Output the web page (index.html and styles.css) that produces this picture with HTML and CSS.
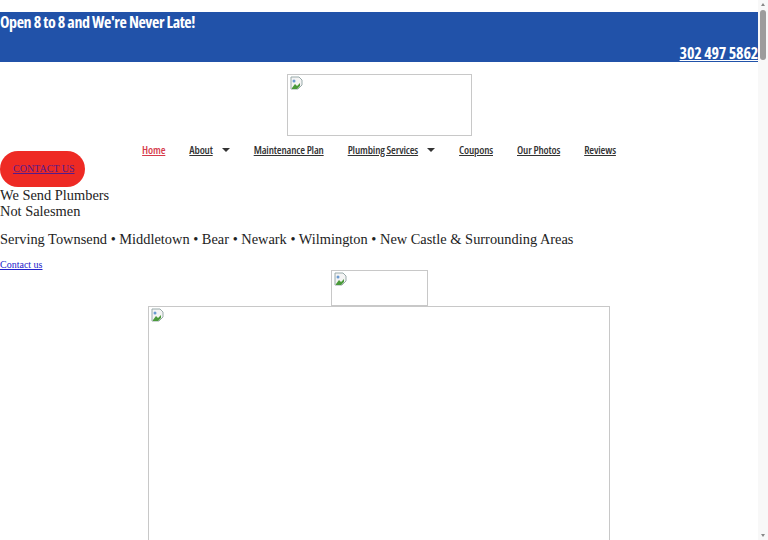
FILE: index.html
```html
<!DOCTYPE html>
<html>
<head>
<meta charset="utf-8">
<link rel="stylesheet" href="styles.css">
</head>
<body>
<div class="page">
<header class="topbar">
  <div class="tagline">Open 8 to 8 and We're Never Late!</div>
  <div class="phone-row"><a class="phone" href="#">302 497 5862</a></div>
</header>
<div class="logo-row">
  <div class="broken logo">
    <svg class="bi" width="16" height="16" viewBox="0 0 16 16"><path d="M2 1h8l3 3v5l-4 4H2z" fill="#f4f4f4" stroke="#9aa" stroke-width="1"/><path d="M3 12l3-4 2 2 3-3v3l-3 3H3z" fill="#4a9a3a"/><circle cx="5" cy="5" r="1.5" fill="#6a9ad0"/></svg>
  </div>
</div>
<nav class="menu">
  <a class="item active" href="#">Home</a>
  <a class="item" href="#">About</a><span class="caret"></span>
  <a class="item" href="#">Maintenance Plan</a>
  <a class="item" href="#">Plumbing Services</a><span class="caret"></span>
  <a class="item" href="#">Coupons</a>
  <a class="item" href="#">Our Photos</a>
  <a class="item" href="#">Reviews</a>
</nav>
<div class="cta"><a class="cta-btn" href="#">CONTACT US</a></div>
<h2 class="slogan">We Send Plumbers<br>Not Salesmen</h2>
<p class="areas">Serving Townsend • Middletown • Bear • Newark • Wilmington • New Castle &amp; Surrounding Areas</p>
<a class="small-link" href="#">Contact us</a>
<div class="img-row">
  <div class="broken badge">
    <svg class="bi" width="16" height="16" viewBox="0 0 16 16"><path d="M2 1h8l3 3v5l-4 4H2z" fill="#f4f4f4" stroke="#9aa" stroke-width="1"/><path d="M3 12l3-4 2 2 3-3v3l-3 3H3z" fill="#4a9a3a"/><circle cx="5" cy="5" r="1.5" fill="#6a9ad0"/></svg>
  </div>
</div>
<div class="img-row">
  <div class="broken hero">
    <svg class="bi" width="16" height="16" viewBox="0 0 16 16"><path d="M2 1h8l3 3v5l-4 4H2z" fill="#f4f4f4" stroke="#9aa" stroke-width="1"/><path d="M3 12l3-4 2 2 3-3v3l-3 3H3z" fill="#4a9a3a"/><circle cx="5" cy="5" r="1.5" fill="#6a9ad0"/></svg>
  </div>
</div>
</div>
<div class="scrollbar" aria-hidden="true">
  <span class="sb-up"></span>
  <span class="sb-thumb"></span>
  <span class="sb-down"></span>
</div>
</body>
</html>
```
FILE: styles.css
```css
html::-webkit-scrollbar { width: 0; height: 0; }

body {
  margin: 0;
  font-family: "Liberation Serif", serif;
  color: #222;
  background: #fff;
}

.page {
  padding-top: 12px;
  margin-right: 10px;
}

.topbar {
  background: #2152a9;
  height: 50px;
  color: #fff;
  font-family: "Open Sans", "DejaVu Sans", sans-serif;
  font-stretch: 75%;
  font-weight: 700;
  display: flex;
  flex-direction: column;
  justify-content: space-between;
}

.tagline {
  font-size: 16px;
  line-height: 20px;
  letter-spacing: -0.4px;
}

.phone-row {
  text-align: right;
  font-size: 16px;
  line-height: 18px;
  letter-spacing: -0.2px;
}

.phone { color: #fff; text-decoration: underline; }

.logo-row, .img-row {
  display: flex;
  justify-content: center;
}

.logo-row { margin-top: 12px; }

.broken {
  box-sizing: border-box;
  border: 1px solid #c8c8c8;
  position: relative;
}

.bi { position: absolute; left: 1px; top: 1px; }

.logo { width: 185px; height: 62px; }
.badge { width: 97px; height: 36px; }
.hero { width: 462px; height: 420px; }

.menu {
  margin-top: 2px;
  height: 13px;
  line-height: 24px;
  display: flex;
  justify-content: center;
  align-items: baseline;
  font-family: "Open Sans", "DejaVu Sans", sans-serif;
  font-stretch: 75%;
  font-weight: 600;
  font-size: 11px;
  letter-spacing: -0.15px;
}

.item {
  color: #333;
  text-decoration: underline;
  margin: 0 12px;
}

.item.active { color: #d63b4b; }

.caret {
  width: 0;
  height: 0;
  border-left: 4px solid transparent;
  border-right: 4px solid transparent;
  border-top: 4px solid #333;
  margin: 0 12px 0 -3px;
  align-self: center;
  position: relative;
  top: 5px;
}

.cta { height: 36px; }

.cta-btn {
  display: inline-block;
  width: 85px;
  height: 36px;
  line-height: 36px;
  box-sizing: border-box;
  padding-left: 13px;
  border-radius: 18px;
  background: #ee2a24;
  color: #551a8b;
  font-size: 10px;
  text-decoration: underline;
  vertical-align: top;
}

.slogan {
  margin: 0;
  font-weight: normal;
  font-size: 14.4px;
  line-height: 16px;
}

.areas {
  margin: 11px 0 11px;
  font-size: 14.4px;
  line-height: 18px;
}

.small-link {
  display: block;
  font-size: 10px;
  line-height: 11px;
  color: #2222cc;
}

.scrollbar {
  position: fixed;
  top: 0;
  right: 0;
  width: 10px;
  height: 100%;
  background: #f8f8f8;
}

.sb-thumb {
  position: absolute;
  left: 2px;
  top: 10px;
  width: 6px;
  height: 50px;
  border-radius: 3px;
  background: #9c9c9c;
}

.sb-up, .sb-down {
  position: absolute;
  left: 3px;
  width: 0;
  height: 0;
  border-left: 2px solid transparent;
  border-right: 2px solid transparent;
}

.sb-up { top: 3px; border-bottom: 3px solid #888; }
.sb-down { bottom: 3px; border-top: 3px solid #888; }
```
